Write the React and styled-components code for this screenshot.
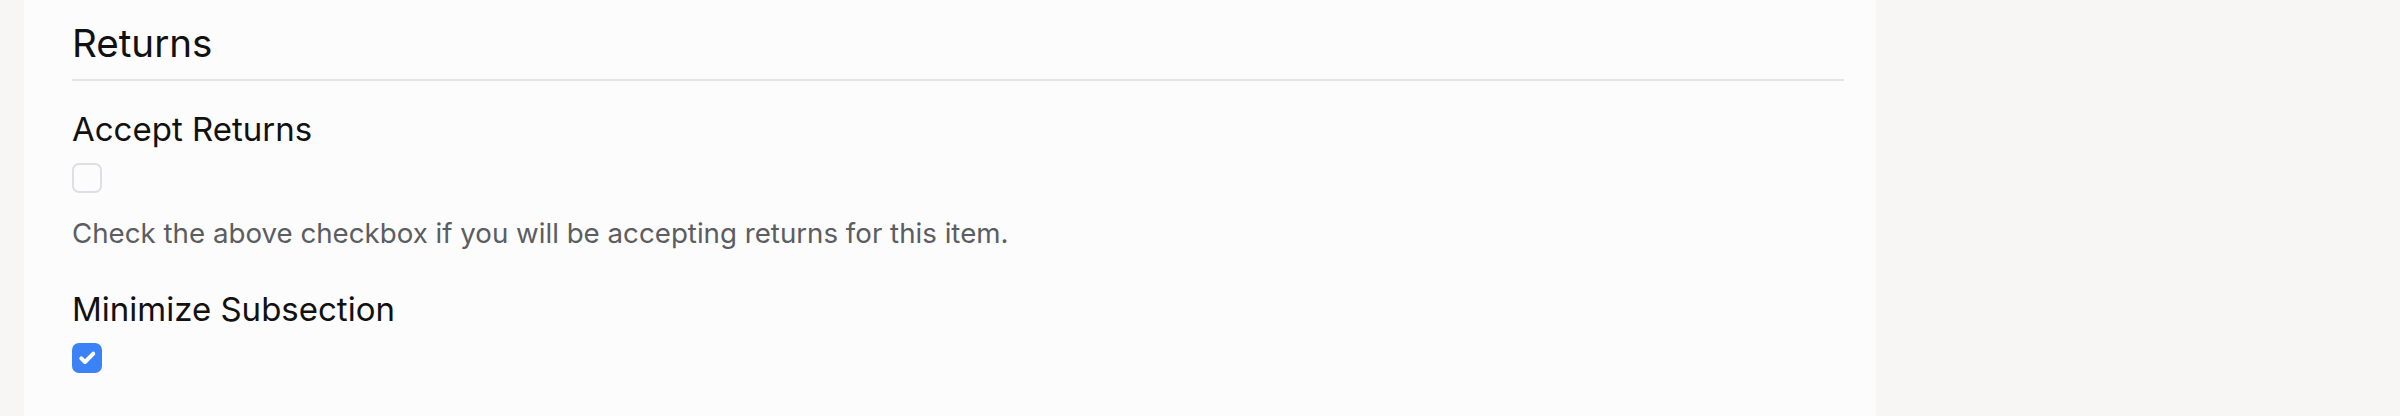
import React from 'react'
import styled, { createGlobalStyle } from 'styled-components'

const GlobalStyle = createGlobalStyle`
    html, body {
        margin: 0;
        padding: 0;
        background: #f7f6f4;
        font-family: Inter, "Noto Sans", "Liberation Sans", sans-serif;
    }
`;

const Page = styled.div`
    display: flex;
    min-height: 416px;
    padding-left: 24px;
`;

const Panel = styled.section`
    width: 1852px;
    box-sizing: border-box;
    background: #fcfcfc;
    padding: 20px 32px 0 48px;
`;

const Heading = styled.h2`
    margin: 0;
    font-size: 38.6px;
    line-height: 46px;
    font-weight: 400;
    color: #111;
    padding-bottom: 13px;
    border-bottom: 2px solid #e3e3e8;
`;

const Field = styled.div`
    display: flex;
    flex-direction: column;
    align-items: flex-start;
    margin-top: ${p => p.$top}px;
`;

const Label = styled.label`
    font-size: 33px;
    line-height: 40px;
    color: #111;
`;

const Box = styled.span`
    display: flex;
    align-items: center;
    justify-content: center;
    width: 30px;
    height: 30px;
    box-sizing: border-box;
    margin-top: 14px;
    border-radius: 7px;
    border: 2px solid ${p => (p.$checked ? '#3b82f6' : '#dcdfe4')};
    background: ${p => (p.$checked ? '#3b82f6' : '#fcfcfc')};
`;

const Help = styled.p`
    margin: 20px 0 0;
    font-size: 27.7px;
    line-height: 40px;
    color: #5b5d62;
`;

function Checkbox({ checked }) {
    return (
        <Box $checked={checked}>
            {checked && (
                <svg width="30" height="30" viewBox="0 0 30 30" style={{ margin: -2 }}>
                    <path d="M9.3 15.3 L13 19 L21.3 10.7" fill="none" stroke="#fff" strokeWidth="4" strokeLinecap="round" strokeLinejoin="round" />
                </svg>
            )}
        </Box>
    )
}

export default function App() {
    return (
        <>
            <GlobalStyle />
            <Page>
                <Panel>
                    <Heading>Returns</Heading>
                    <Field $top={28}>
                        <Label>Accept Returns</Label>
                        <Checkbox />
                        <Help>Check the above checkbox if you will be accepting returns for this item.</Help>
                    </Field>
                    <Field $top={36}>
                        <Label>Minimize Subsection</Label>
                        <Checkbox checked />
                    </Field>
                </Panel>
            </Page>
        </>
    )
}
